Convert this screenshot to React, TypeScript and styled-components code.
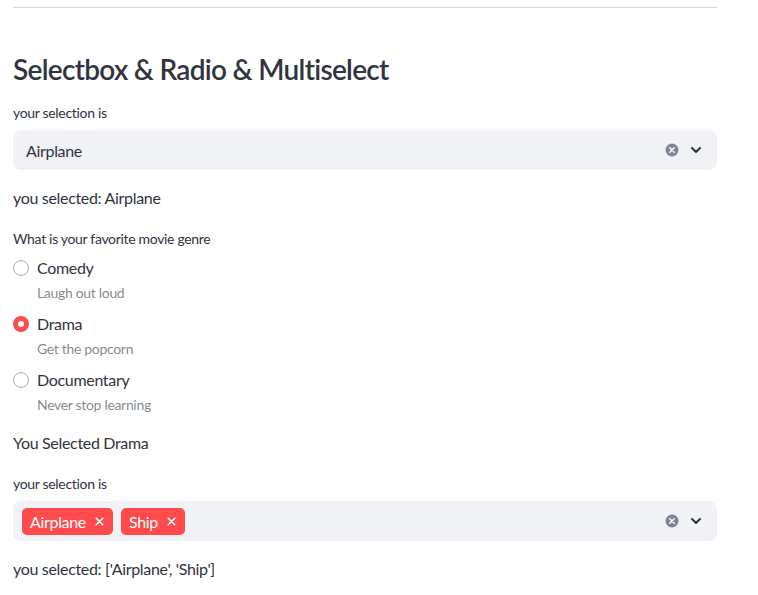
import React from "react";
import styled, { createGlobalStyle } from "styled-components";

const colors = {
  text: "rgb(49, 51, 63)",
  muted: "rgba(49, 51, 63, 0.6)",
  field: "rgb(240, 242, 246)",
  primary: "rgb(255, 75, 75)",
  rule: "rgba(49, 51, 63, 0.2)",
  icon: "rgb(128, 132, 149)",
};

const GlobalStyle = createGlobalStyle`
  body {
    margin: 0;
    background: #fff;
    font-family: Lato, "Noto Sans", sans-serif;
    font-variant-ligatures: none;
    letter-spacing: -0.02em;
    color: ${colors.text};
  }
`;

const Page = styled.main`
  width: 704px;
  padding: 7px 0 0 13px;
`;

const Rule = styled.hr`
  margin: 0;
  border: none;
  height: 1px;
  background: ${colors.rule};
`;

const Heading = styled.h3`
  margin: 41px 0 0;
  font-size: 28px;
  line-height: 40px;
  font-weight: 600;
  letter-spacing: -0.025em;
`;

const Label = styled.div<{ $top: number }>`
  margin-top: ${(p) => p.$top}px;
  font-size: 14px;
  line-height: 20px;
`;

const Text = styled.p`
  margin: 16px 0 0;
  font-size: 16px;
  line-height: 24px;
`;

const Field = styled.div`
  margin-top: 7px;
  height: 40px;
  border-radius: 8px;
  background: ${colors.field};
  display: flex;
  align-items: center;
  padding: 0 15px 0 13px;
  box-sizing: border-box;
`;

const Value = styled.div`
  flex: 1;
  font-size: 16px;
  display: flex;
  gap: 8px;
  align-items: center;
`;

const Tags = styled(Value)`
  margin-left: -4px;
`;

const Tag = styled.span`
  display: inline-flex;
  align-items: center;
  gap: 9px;
  height: 27px;
  padding: 0 9px 0 8px;
  border-radius: 5px;
  background: ${colors.primary};
  color: #fff;
  font-size: 16px;
`;

const Icons = styled.div`
  display: flex;
  align-items: center;
  gap: 11px;
`;

const Options = styled.div`
  margin-top: 7px;
  display: flex;
  flex-direction: column;
  gap: 9px;
`;

const Option = styled.div`
  display: grid;
  grid-template-columns: 16px 1fr;
  column-gap: 8px;
  row-gap: 3px;
  align-items: center;
`;

const Dot = styled.span<{ $on: boolean }>`
  width: 16px;
  height: 16px;
  box-sizing: border-box;
  border-radius: 50%;
  border: ${(p) => (p.$on ? `5px solid ${colors.primary}` : "1px solid rgb(172, 174, 181)")};
  background: #fff;
`;

const OptionLabel = styled.span`
  font-size: 16px;
  line-height: 24px;
`;

const Caption = styled.span`
  grid-column: 2;
  font-size: 14px;
  line-height: 20px;
  color: ${colors.muted};
`;

const ClearIcon = () => (
  <svg width="14" height="14" viewBox="0 0 14 14">
    <circle cx="7" cy="7" r="6.5" fill={colors.icon} />
    <path d="M4.8 4.8l4.4 4.4M9.2 4.8l-4.4 4.4" stroke="#fff" strokeWidth="1.5" strokeLinecap="round" />
  </svg>
);

const Chevron = () => (
  <svg width="12" height="12" viewBox="0 0 12 12">
    <path d="M2 4l4 4 4-4" fill="none" stroke={colors.text} strokeWidth="2" strokeLinecap="round" strokeLinejoin="round" />
  </svg>
);

const TagX = () => (
  <svg width="9" height="9" viewBox="0 0 9 9">
    <path d="M1.2 1.2l6.6 6.6M7.8 1.2l-6.6 6.6" stroke="#fff" strokeWidth="1.6" strokeLinecap="round" />
  </svg>
);

const genres = [
  { label: "Comedy", caption: "Laugh out loud" },
  { label: "Drama", caption: "Get the popcorn" },
  { label: "Documentary", caption: "Never stop learning" },
];

export default function App() {
  const picked = "Drama";
  return (
    <>
      <GlobalStyle />
      <Page>
        <Rule />
        <Heading>Selectbox &amp; Radio &amp; Multiselect</Heading>

        <Label $top={14}>your selection is</Label>
        <Field>
          <Value>Airplane</Value>
          <Icons>
            <ClearIcon />
            <Chevron />
          </Icons>
        </Field>
        <Text>you selected: Airplane</Text>

        <Label $top={19}>What is your favorite movie genre</Label>
        <Options>
          {genres.map((g) => (
            <Option key={g.label}>
              <Dot $on={g.label === picked} />
              <OptionLabel>{g.label}</OptionLabel>
              <Caption>{g.caption}</Caption>
            </Option>
          ))}
        </Options>
        <Text>You Selected Drama</Text>

        <Label $top={19}>your selection is</Label>
        <Field>
          <Tags>
            {["Airplane", "Ship"].map((t) => (
              <Tag key={t}>
                {t}
                <TagX />
              </Tag>
            ))}
          </Tags>
          <Icons>
            <ClearIcon />
            <Chevron />
          </Icons>
        </Field>
        <Text>you selected: ['Airplane', 'Ship']</Text>
      </Page>
    </>
  );
}
